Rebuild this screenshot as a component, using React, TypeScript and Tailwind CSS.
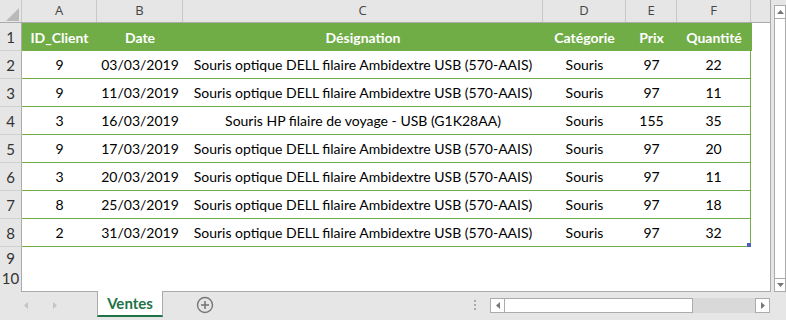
import React from 'react';

const rows = [
  { id: '9', date: '03/03/2019', des: 'Souris optique DELL filaire Ambidextre USB (570-AAIS)', cat: 'Souris', prix: '97', qte: '22' },
  { id: '9', date: '11/03/2019', des: 'Souris optique DELL filaire Ambidextre USB (570-AAIS)', cat: 'Souris', prix: '97', qte: '11' },
  { id: '3', date: '16/03/2019', des: 'Souris HP filaire de voyage - USB (G1K28AA)', cat: 'Souris', prix: '155', qte: '35' },
  { id: '9', date: '17/03/2019', des: 'Souris optique DELL filaire Ambidextre USB (570-AAIS)', cat: 'Souris', prix: '97', qte: '20' },
  { id: '3', date: '20/03/2019', des: 'Souris optique DELL filaire Ambidextre USB (570-AAIS)', cat: 'Souris', prix: '97', qte: '11' },
  { id: '8', date: '25/03/2019', des: 'Souris optique DELL filaire Ambidextre USB (570-AAIS)', cat: 'Souris', prix: '97', qte: '18' },
  { id: '2', date: '31/03/2019', des: 'Souris optique DELL filaire Ambidextre USB (570-AAIS)', cat: 'Souris', prix: '97', qte: '32' },
];

const cols = 'grid grid-cols-[22px_75px_86px_360px_83px_51px_74px_20px]';

function RowHead({ n, last }: { n: number; last?: boolean }) {
  return (
    <div
      className={`flex items-end justify-center pb-[2px] bg-[#e6e6e6] border-r border-[#ababab] text-[15px] text-[#333] ${last ? '' : 'border-b border-b-[#d0d0d0]'}`}
    >
      {n}
    </div>
  );
}

export default function App() {
  return (
    <div className="w-[786px] h-[320px] flex flex-col bg-white overflow-hidden font-['Lato','Liberation_Sans',sans-serif] text-black">
      <div className="flex h-[292px]">
        {/* sheet */}
        <div className="w-[771px] flex flex-col border-r border-[#ababab] border-b border-b-[#ababab]">
          {/* column letters */}
          <div className={`${cols} h-[23px] bg-[#e6e6e6] border-b border-[#ababab] font-['Open_Sans','Liberation_Sans',sans-serif] text-[13px] text-[#444]`}>
            <div className="relative border-r border-[#c8c8c8]">
              <svg className="absolute left-[6px] top-[8px]" width="13" height="13" viewBox="0 0 13 13">
                <polygon points="13,0 13,13 0,13" fill="#b9b9b9" />
              </svg>
            </div>
            {['A', 'B', 'C', 'D', 'E', 'F', ''].map((c, i) => (
              <div key={i} className="flex items-center justify-center border-r border-[#c8c8c8] last:border-r-0">
                {c}
              </div>
            ))}
          </div>

          {/* header row */}
          <div className={`${cols} h-[28px]`}>
            <RowHead n={1} />
            {['ID_Client', 'Date', 'Désignation', 'Catégorie', 'Prix', 'Quantité'].map((h) => (
              <div key={h} className="flex items-center justify-center bg-[#70ad47] text-white font-bold text-[14px]">
                {h}
              </div>
            ))}
            <div className="border-l border-[#70ad47]" />
          </div>

          {rows.map((r, i) => (
            <div key={i} className={`${cols} h-[28px]`}>
              <RowHead n={i + 2} />
              {[r.id, r.date, r.des, r.cat, r.prix, r.qte].map((v, j) => (
                <div
                  key={j}
                  className={`relative flex items-center justify-center border-b border-[#70ad47] text-[14px] whitespace-nowrap ${j === 5 ? 'border-r' : ''}`}
                >
                  {v}
                  {i === rows.length - 1 && j === 5 && (
                    <span className="absolute -right-px -bottom-px w-[4px] h-[4px] bg-[#4a5fc1]" />
                  )}
                </div>
              ))}
              <div />
            </div>
          ))}

          <div className={`${cols} h-[20px]`}>
            <RowHead n={9} />
          </div>
          <div className={`${cols} h-[21px]`}>
            <RowHead n={10} />
          </div>
          <div className={`${cols} flex-1`}>
            <div className="bg-[#e6e6e6] border-r border-[#ababab]" />
          </div>
        </div>

        {/* vertical scrollbar */}
        <div className="flex-1 bg-[#e6e6e6] pl-[3px] pt-[5px] flex flex-col">
          <div className="h-[14px] bg-white border border-[#ababab] flex items-center justify-center">
            <svg width="7" height="4" viewBox="0 0 7 4"><polygon points="0,4 7,4 3.5,0" fill="#777" /></svg>
          </div>
          <div className="flex-1 bg-white border-x border-[#ababab]" />
          <div className="h-[14px] bg-white border border-[#ababab] flex items-center justify-center">
            <svg width="7" height="4" viewBox="0 0 7 4"><polygon points="0,0 7,0 3.5,4" fill="#777" /></svg>
          </div>
        </div>
      </div>

      {/* tab bar */}
      <div className="flex-1 flex items-start bg-[#e6e6e6]">
        <div className="w-[97px] h-[26px] flex items-center gap-[25px] pl-[24px]">
          <svg width="4" height="7" viewBox="0 0 4 7"><polygon points="4,0 4,7 0,3.5" fill="#c4c4c4" /></svg>
          <svg width="4" height="7" viewBox="0 0 4 7"><polygon points="0,0 0,7 4,3.5" fill="#c4c4c4" /></svg>
        </div>
        <div className="w-[66px] h-[26px] -mt-px bg-white border-x border-[#ababab] border-b-2 border-b-[#217346] flex items-center justify-center text-[#217346] font-bold text-[15px]">
          Ventes
        </div>
        <div className="w-[84px] h-[26px] flex items-center justify-center">
          <svg width="18" height="18" viewBox="0 0 18 18">
            <circle cx="9" cy="9" r="7.5" fill="none" stroke="#777" strokeWidth="1.4" />
            <line x1="9" y1="5" x2="9" y2="13" stroke="#777" strokeWidth="1.6" />
            <line x1="5" y1="9" x2="13" y2="9" stroke="#777" strokeWidth="1.6" />
          </svg>
        </div>
        <div className="flex-1 h-[26px] flex items-center justify-end pr-[16px]">
          <div className="flex flex-col gap-[2px] mr-[14px]">
            <span className="w-[2px] h-[2px] bg-[#aaa]" />
            <span className="w-[2px] h-[2px] bg-[#aaa]" />
            <span className="w-[2px] h-[2px] bg-[#aaa]" />
          </div>
          <div className="w-[15px] h-[15px] bg-white border border-[#ababab] flex items-center justify-center">
            <svg width="4" height="7" viewBox="0 0 4 7"><polygon points="4,0 4,7 0,3.5" fill="#777" /></svg>
          </div>
          <div className="w-[188px] h-[15px] bg-white border-y border-r border-[#ababab]" />
          <div className="w-[62px] h-[15px] bg-[#d9d9d9]" />
          <div className="w-[15px] h-[15px] bg-white border border-[#ababab] flex items-center justify-center">
            <svg width="4" height="7" viewBox="0 0 4 7"><polygon points="0,0 0,7 4,3.5" fill="#777" /></svg>
          </div>
        </div>
      </div>
    </div>
  );
}
